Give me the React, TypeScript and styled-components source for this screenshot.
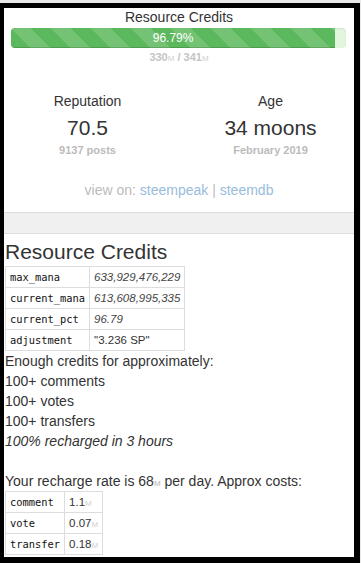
import React from 'react'
import styled, { createGlobalStyle } from 'styled-components'

const GlobalStyle = createGlobalStyle`
  html, body {
    margin: 0;
    padding: 0;
    background: #e9e9e9;
  }
  body {
    font-family: "Liberation Sans", Arial, sans-serif;
    font-size: 14px;
    line-height: 20px;
    color: #333;
  }
`

const Frame = styled.div`
  box-sizing: border-box;
  width: 360px;
  height: 560px;
  margin-top: 3px;
  background: #fff;
  border-style: solid;
  border-color: #000;
  border-width: 5px 6px 6px 4px;
  overflow: hidden;
`

const Summary = styled.section`
  text-align: center;
`

const Title = styled.div`
  font-size: 14px;
  line-height: 18px;
`

const Progress = styled.div`
  height: 20px;
  margin: 2px 8px 0 7px;
  border-radius: 4px;
  background: #e2f6de;
  box-shadow: inset 0 1px 2px rgba(0, 0, 0, 0.08);
  overflow: hidden;
`

const Bar = styled.div`
  height: 100%;
  background-color: #5cb85c;
  background-image: linear-gradient(
    45deg,
    rgba(255, 255, 255, 0.15) 25%,
    transparent 25%,
    transparent 50%,
    rgba(255, 255, 255, 0.15) 50%,
    rgba(255, 255, 255, 0.15) 75%,
    transparent 75%,
    transparent
  );
  background-size: 40px 40px;
  box-shadow: inset 0 -1px 0 rgba(0, 0, 0, 0.15);
  color: #fff;
  font-size: 12px;
  line-height: 20px;
  text-align: center;
`

const Usage = styled.div`
  margin-top: 1px;
  font-size: 11px;
  font-weight: bold;
  line-height: 16px;
  color: #c4c4c4;
`

const Unit = styled.span<{ $light?: boolean }>`
  font-size: 8px;
  font-weight: normal;
  line-height: 1;
  color: ${(p) => (p.$light ? '#d0d0d0' : '#b5b5b5')};
`

const Stats = styled.div`
  display: grid;
  grid-template-columns: 1fr 1fr;
  margin: 26px -8px 0;
`

const Stat = styled.div`
  text-align: center;
`

const StatLabel = styled.div`
  font-size: 14px;
  line-height: 20px;
`

const StatValue = styled.div`
  margin-top: 5px;
  font-size: 21px;
  line-height: 24px;
`

const StatSub = styled.div`
  margin-top: 2px;
  font-size: 11px;
  font-weight: bold;
  line-height: 16px;
  color: #bbb;
`

const ViewOn = styled.div`
  margin-top: 22px;
  color: #bbb;
`

const Link = styled.a`
  color: #99bcdb;
  text-decoration: none;
`

const Band = styled.div`
  height: 20px;
  margin-top: 12px;
  background: #f0f0f0;
  border-top: 1px solid #ddd;
  border-bottom: 1px solid #ddd;
`

const Details = styled.section`
  padding: 0 1px;
`

const Heading = styled.h3`
  margin: 6px 0 2px;
  font-size: 21px;
  font-weight: normal;
  line-height: 24px;
`

const Table = styled.table`
  border-collapse: collapse;
`

const Key = styled.td`
  height: 14px;
  padding: 3px 4px;
  border: 1px solid #ddd;
  font-family: "DejaVu Sans Mono", "Liberation Mono", monospace;
  font-size: 10.4px;
  line-height: 14px;
  color: #111;
`

const Value = styled.td<{ $italic?: boolean }>`
  height: 14px;
  padding: 3px 4px;
  border: 1px solid #ddd;
  font-size: 11.5px;
  line-height: 14px;
  font-style: ${(p) => (p.$italic ? 'italic' : 'normal')};
  color: ${(p) => (p.$italic ? '#444' : '#333')};
  white-space: nowrap;
`

const Line = styled.div<{ $italic?: boolean }>`
  line-height: 20px;
  font-style: ${(p) => (p.$italic ? 'italic' : 'normal')};
`

const Blank = styled.div`
  height: 20px;
`

const manaRows = [
  { key: 'max_mana', value: '633,929,476,229', italic: true },
  { key: 'current_mana', value: '613,608,995,335', italic: true },
  { key: 'current_pct', value: '96.79', italic: true },
  { key: 'adjustment', value: '"3.236 SP"', italic: false },
]

const costRows = [
  { key: 'comment', value: '1.1' },
  { key: 'vote', value: '0.07' },
  { key: 'transfer', value: '0.18' },
]

export default function App() {
  const pct = 96.79
  return (
    <>
      <GlobalStyle />
      <Frame>
        <Summary>
          <Title>Resource Credits</Title>
          <Progress>
            <Bar style={{ width: `${pct}%` }}>{pct}%</Bar>
          </Progress>
          <Usage>
            330<Unit $light>M</Unit> / 341<Unit $light>M</Unit>
          </Usage>
          <Stats>
            <Stat>
              <StatLabel>Reputation</StatLabel>
              <StatValue>70.5</StatValue>
              <StatSub>9137 posts</StatSub>
            </Stat>
            <Stat>
              <StatLabel>Age</StatLabel>
              <StatValue>34 moons</StatValue>
              <StatSub>February 2019</StatSub>
            </Stat>
          </Stats>
          <ViewOn>
            view on: <Link href="#">steempeak</Link> | <Link href="#">steemdb</Link>
          </ViewOn>
        </Summary>
        <Band />
        <Details>
          <Heading>Resource Credits</Heading>
          <Table>
            <tbody>
              {manaRows.map((r) => (
                <tr key={r.key}>
                  <Key>{r.key}</Key>
                  <Value $italic={r.italic}>{r.value}</Value>
                </tr>
              ))}
            </tbody>
          </Table>
          <Line>Enough credits for approximately:</Line>
          <Line>100+ comments</Line>
          <Line>100+ votes</Line>
          <Line>100+ transfers</Line>
          <Line $italic>100% recharged in 3 hours</Line>
          <Blank />
          <Line>
            Your recharge rate is 68<Unit>M</Unit> per day. Approx costs:
          </Line>
          <Table>
            <tbody>
              {costRows.map((r) => (
                <tr key={r.key}>
                  <Key>{r.key}</Key>
                  <Value>
                    {r.value}
                    <Unit $light>M</Unit>
                  </Value>
                </tr>
              ))}
            </tbody>
          </Table>
        </Details>
      </Frame>
    </>
  )
}
